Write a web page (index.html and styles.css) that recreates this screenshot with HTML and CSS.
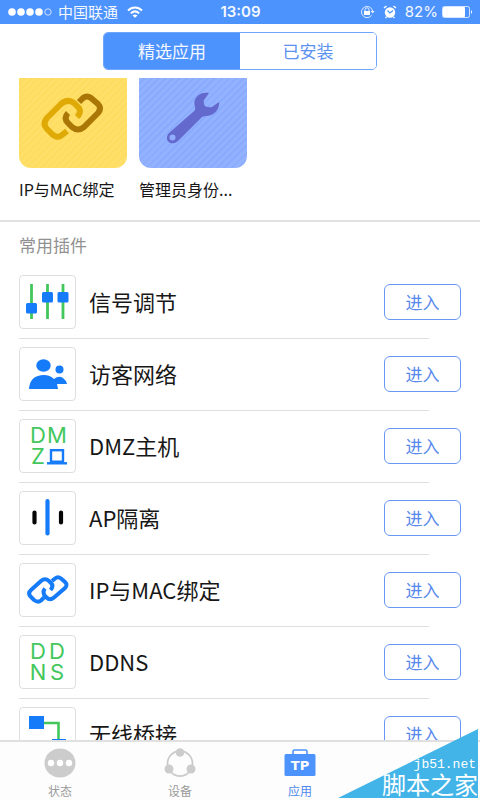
FILE: index.html
```html
<!DOCTYPE html>
<html lang="zh-CN">
<head>
<meta charset="utf-8">
<meta name="viewport" content="width=device-width, initial-scale=1">
<title>应用</title>
<link rel="stylesheet" href="styles.css">
</head>
<body>
<div class="status">
  <div class="status-left">
    <svg width="44" height="10" viewBox="0 0 44 10"><g fill="#fff"><circle cx="4" cy="5" r="3.8"/><circle cx="13" cy="5" r="3.8"/><circle cx="22" cy="5" r="3.8"/><circle cx="31" cy="5" r="3.8"/></g><circle cx="40" cy="5" r="3.2" fill="none" stroke="#cfe0ff"/></svg>
    <span class="carrier">中国联通</span>
    <svg width="16" height="12" viewBox="0 0 16 12" fill="none" stroke="#fff" stroke-width="2"><path d="M1 4.5C5 .4 11 .4 15 4.5M3.8 7.4c2.6-2.5 5.800-2.500 8.400 0"/><path d="M8 11.800 5.500 9.400c1.500-1.200 3.500-1.200 5 0z" fill="#fff" stroke="none"/></svg>
  </div>
  <time class="clock">13:09</time>
  <div class="status-right">
    <svg width="15" height="14" viewBox="0 0 15 14" fill="none" stroke="#e3edff"><path d="M11.500 10.500A5.600 5.600 0 1 1 12.600 6"/><path d="m10.500 6 2.200 2.600L14.700 6z" fill="#e3edff" stroke="none"/><path d="M5 6V4.800a2 2 0 0 1 4 0V6"/><rect x="4" y="6" width="6" height="4" fill="#fff" stroke="none"/></svg>
    <svg width="14" height="14" viewBox="0 0 14 14"><circle cx="7" cy="7.500" r="5.200" fill="#fff"/><path d="m1 3 2.500-2M13 3l-2.500-2M3.500 12l-1 1M10.500 12l1 1" stroke="#fff" stroke-width="1.500"/><path d="m4.500 5.500 2.500 2.500 3-2.500" fill="none" stroke="#4d93fe" stroke-width="1.200"/></svg>
    <span class="percent">82%</span>
    <svg width="31" height="12" viewBox="0 0 31 12"><rect x=".5" y=".5" width="27" height="11" rx="2" fill="none" stroke="#d5e5ff"/><rect x="1" y="1" width="22" height="10" rx="1" fill="#fff"/><path d="M29 4q2 2 0 4z" fill="#fff"/></svg>
  </div>
</div>

<header class="header">
  <div class="segments">
    <button class="segment active" type="button">精选应用</button>
    <button class="segment" type="button">已安装</button>
  </div>
</header>

<main class="content">
  <section class="featured">
    <a class="feature" href="#mac">
      <span class="card yellow">
        <svg width="64" height="50" viewBox="0 0 64 50" fill="none" stroke-width="6" stroke-linejoin="round"><path d="M26 38 21 42Q16 46 11 41L6 36Q1 31 6 25L19 12Q26 5 33 10L36 13Q42 18 36 24" stroke="#e0aa06"/><path d="M38 9 42 5Q46 2 50 5L57 11Q61 15 57 20L43 34Q37 39 31 34L27 30Q22 25 27 20" stroke="#aa7707"/></svg>
      </span>
      <span class="feature-name">IP与MAC绑定</span>
    </a>
    <a class="feature" href="#admin">
      <span class="card blue">
        <svg width="54" height="52" viewBox="0 0 54 52"><path d="M43 1C34-1 26 6 29 15Q30 18 27 20L3 41C-3 48 5 55 12 49L34 27Q36 24 40 24C48 24 54 17 53 10L46 15Q42 16 39 14Q37 11 38 8Z" fill="#6369cd"/><circle cx="6.500" cy="45.500" r="3" fill="#92adff"/></svg>
      </span>
      <span class="feature-name">管理员身份...</span>
    </a>
  </section>

  <section class="plugins">
    <h2 class="heading">常用插件</h2>
    <ul class="list">
      <li class="row">
        <span class="icon"><svg width="55" height="52" viewBox="0 0 55 52"><path d="M11.500 8v35M27.500 8v35M43 8v35" stroke="#43c75c" stroke-width="2.800"/><g fill="#167bf9"><rect x="6" y="27" width="11" height="10.500" rx="1.500"/><rect x="22" y="16" width="11" height="10.500" rx="1.500"/><rect x="37.500" y="16" width="11" height="10.500" rx="1.500"/></g></svg></span>
        <span class="name">信号调节</span><button class="enter" type="button">进入</button>
      </li>
      <li class="row">
        <span class="icon"><svg width="55" height="52" viewBox="0 0 55 52" fill="#167bf9"><ellipse cx="23.500" cy="17.500" rx="7.200" ry="6.200"/><path d="M9 41q1-14 15-14 6 0 10 4 5-4 9-1 3 2 4 6H37l1 5z"/><circle cx="39.500" cy="21.500" r="4"/></svg></span>
        <span class="name">访客网络</span><button class="enter" type="button">进入</button>
      </li>
      <li class="row">
        <span class="icon letters"><span>D</span><span>M</span><span>Z</span><svg width="20" height="16" viewBox="0 0 20 16" fill="none" stroke="#167bf9"><rect x="4" y="1.200" width="12" height="11.500" stroke-width="2.400"/><path d="M0 14.300h20" stroke-width="2.400"/></svg></span>
        <span class="name">DMZ主机</span><button class="enter" type="button">进入</button>
      </li>
      <li class="row">
        <span class="icon"><svg width="55" height="52" viewBox="0 0 55 52" stroke-linecap="round" stroke-width="4.200"><path d="M14.500 20.500v10M41 20.500v10" stroke="#050505"/><path d="M27.500 9v32.500" stroke="#167bf9"/></svg></span>
        <span class="name">AP隔离</span><button class="enter" type="button">进入</button>
      </li>
      <li class="row">
        <span class="icon"><svg width="42" height="30" viewBox="0 0 42 30" fill="none" stroke="#167bf9" stroke-width="4"><path d="m17 22.500-3 3Q11 28 7 25L3.500 21.500Q.5 18 4 15L14 6Q18 2.500 22 6L24 8Q27 11 23.500 15"/><path d="m25 6 3-2.500Q31 1 34 3.500L38 7Q41 10 38 13L27 22.500Q23 26 19.500 22.500L18 21Q15 17 18 13.500"/></svg></span>
        <span class="name">IP与MAC绑定</span><button class="enter" type="button">进入</button>
      </li>
      <li class="row">
        <span class="icon letters"><span>D</span><span>D</span><span>N</span><span>S</span></span>
        <span class="name">DDNS</span><button class="enter" type="button">进入</button>
      </li>
      <li class="row">
        <span class="icon"><svg width="55" height="52" viewBox="0 0 55 52"><path d="M20 15h18.500v18" fill="none" stroke="#43c75c" stroke-width="2.600"/><path d="M9 8h15v13H9zM32 31h14v13H32z" fill="#167bf9"/></svg></span>
        <span class="name">无线桥接</span><button class="enter" type="button">进入</button>
      </li>
    </ul>
  </section>
</main>

<nav class="tabs">
  <a class="tab" href="#status"><svg width="32" height="30" viewBox="0 0 32 30"><ellipse cx="16" cy="15" rx="15.500" ry="14.500" fill="#ccc"/><g fill="#fff"><circle cx="7" cy="15" r="3.200"/><circle cx="16" cy="15" r="3.200"/><circle cx="25" cy="15" r="3.200"/></g></svg><span>状态</span></a>
  <a class="tab" href="#devices"><svg width="32" height="30" viewBox="0 0 32 30"><ellipse cx="16" cy="15.500" rx="12.500" ry="12.500" fill="none" stroke="#ccc" stroke-width="1.800"/><g fill="#ccc"><circle cx="16" cy="4.500" r="4.300"/><circle cx="5" cy="21" r="4.500"/><circle cx="27" cy="21" r="4.500"/></g></svg><span>设备</span></a>
  <a class="tab current" href="#apps"><svg width="32" height="30" viewBox="0 0 32 30"><path d="M9 8V3.500Q9 2 10.500 2h11Q23 2 23 3.500V8" fill="none" stroke="#4d93fe" stroke-width="1.600"/><rect x=".5" y="6" width="31" height="22" rx="1.500" fill="#4d93fe"/><text x="16" y="22" class="badge-text">TP</text></svg><span>应用</span></a>
  <div class="watermark"><svg class="corner" viewBox="0 0 140 69" preserveAspectRatio="none"><path d="M0 69 140 0V69z" fill="#42b4e8"/></svg><span class="site">jb51.net</span><span class="site-name">脚本之家</span></div>
</nav>
</body>
</html>
```
FILE: styles.css
```css
* { box-sizing: border-box; }

body {
  margin: 0;
  height: 100vh;
  display: flex;
  flex-direction: column;
  background: #fff;
  color: #171717;
  font-family: "Noto Sans CJK SC", sans-serif;
}

a { color: inherit; text-decoration: none; }
button { font-family: inherit; padding: 0; cursor: pointer; }
svg { display: block; flex: none; }

.status {
  display: grid;
  grid-template-columns: 1fr auto 1fr;
  align-items: center;
  height: 24px;
  padding: 0 7px 0 8px;
  background: #4d93fe;
  color: #f4f8ff;
  line-height: 24px;
}
.status-left, .status-right { display: flex; align-items: center; }
.status-left { gap: 6px; }
.status-right { justify-content: flex-end; gap: 8px; }
.carrier { font-size: 15px; line-height: 24px; margin-right: 3px; }
.clock { font-family: Inter, sans-serif; font-size: 15px; font-weight: 600; }
.percent { font-family: Inter, sans-serif; font-size: 15px; }
.status-right .percent { margin-right: -4px; }

.header { padding: 8px 103px; }
.segments {
  display: flex;
  height: 38px;
  border: 1px solid #6fa5fa;
  border-radius: 5px;
  overflow: hidden;
}
.segment {
  flex: 1;
  border: 0;
  padding-bottom: 2px;
  background: #fff;
  color: #5b92f0;
  font-size: 17px;
}
.segment.active { background: #4d93fe; color: #f4f8ff; }

.content { flex: 1; min-height: 0; overflow: hidden; }

.featured {
  display: flex;
  gap: 12px;
  height: 144px;
  padding: 0 19px;
  border-bottom: 2px solid #e2e2e2;
}
.feature { width: 108px; }
.card {
  display: flex;
  align-items: center;
  justify-content: center;
  height: 90px;
  padding-bottom: 10px;
  border-radius: 0 0 12px 12px;
}
.yellow { background: repeating-linear-gradient(135deg, #ffdf68 0 3px, #fddc60 3px 5px); }
.blue { background: repeating-linear-gradient(135deg, #92b1ff 0 3px, #8aabfd 3px 5px); }
.feature-name { display: block; margin-top: 10px; font-size: 16px; line-height: 22px; white-space: nowrap; }

.heading {
  margin: 0;
  padding: 0 19px;
  color: #919191;
  font-size: 17px;
  font-weight: 400;
  line-height: 45px;
}
.list { margin: 0; padding: 0; list-style: none; }
.row {
  display: flex;
  align-items: center;
  height: 72px;
  padding: 0 19px 2px;
  background: linear-gradient(#dedede, #dedede) 19px 100% / calc(100% - 70px) 1px no-repeat;
}
.icon {
  display: flex;
  align-items: center;
  justify-content: center;
  width: 57px;
  height: 54px;
  border: 1px solid #dedede;
  border-radius: 4px;
}
.letters {
  display: grid;
  grid-template-columns: 19px 19px;
  grid-template-rows: 21px 21px;
  place-content: center;
  place-items: center;
  color: #43c75c;
  font-family: Inter, sans-serif;
  font-size: 22px;
  line-height: 21px;
}
.name {
  flex: 1;
  margin-left: 13px;
  font-family: "Noto Sans CJK SC", sans-serif;
  padding-bottom: 3px;
  font-size: 22px;
  line-height: 30px;
}
.enter {
  width: 77px;
  height: 36px;
  border: 1px solid #6797f2;
  border-radius: 6px;
  padding-bottom: 2px;
  background: #fff;
  color: #5687eb;
  font-size: 17px;
}

.tabs {
  position: relative;
  display: grid;
  grid-template-columns: repeat(4, 1fr);
  height: 60px;
  border-top: 2px solid #e0e0e0;
  background: #fdfdfd;
}
.tab {
  display: flex;
  flex-direction: column;
  align-items: center;
  gap: 4px;
  padding-top: 6px;
  color: #9b9b9b;
  font-size: 12px;
  line-height: 18px;
}
.current { color: #4d88ee; }
.badge-text { fill: #fff; font: bold 13px "DejaVu Sans", sans-serif; text-anchor: middle; }

.watermark {
  position: absolute;
  right: 2px;
  bottom: 2px;
  width: 140px;
  height: 69px;
  color: #fff;
  text-align: right;
}
.corner { position: absolute; inset: 0; width: 100%; height: 100%; }
.site, .site-name { position: relative; display: block; white-space: nowrap; }
.site { padding: 29px 2px 0 0; font: 13px/14px "Liberation Mono", monospace; }
.site-name { font-size: 24px; line-height: 24px; }
```
